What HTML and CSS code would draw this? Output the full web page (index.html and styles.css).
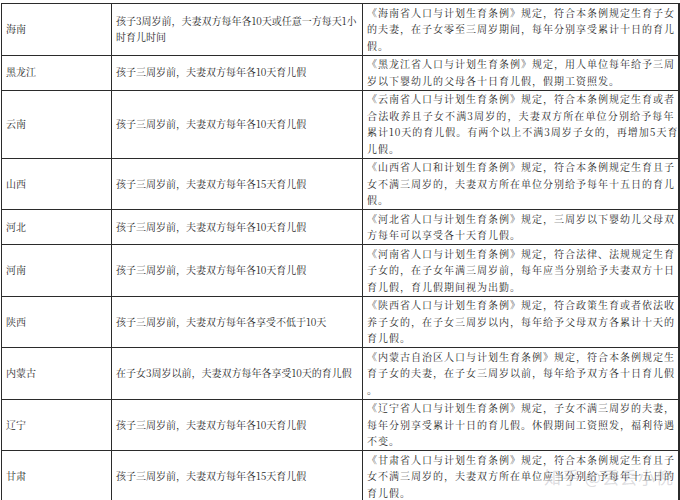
FILE: index.html
```html
<!DOCTYPE html>
<html lang="zh-CN">
<head>
<meta charset="utf-8">
<title>育儿假规定</title>
<link rel="stylesheet" href="styles.css">
</head>
<body>
<div class="page">
<table class="law">
  <colgroup><col class="c1"><col class="c2"><col class="c3"></colgroup>
  <tr>
    <td class="prov">海南</td>
    <td class="rule">孩子3周岁前，夫妻双方每年各10天或任意一方每天1小<br>时育儿时间</td>
    <td class="text"><span class="ln">《海南省人口与计划生育条例》规定，符合本条例规定生育子女</span><span class="ln">的夫妻，在子女零至三周岁期间，每年分别享受累计十日的育儿</span>假。</td>
  </tr>
  <tr>
    <td class="prov">黑龙江</td>
    <td class="rule">孩子三周岁前，夫妻双方每年各10天育儿假</td>
    <td class="text"><span class="ln">《黑龙江省人口与计划生育条例》规定，用人单位每年给予三周</span>岁以下婴幼儿的父母各十日育儿假，假期工资照发。</td>
  </tr>
  <tr>
    <td class="prov">云南</td>
    <td class="rule">孩子三周岁前，夫妻双方每年各10天育儿假</td>
    <td class="text"><span class="ln">《云南省人口与计划生育条例》规定，符合本条例规定生育或者</span><span class="ln">合法收养且子女不满3周岁的，夫妻双方所在单位分别给予每年</span><span class="ln">累计10天的育儿假。有两个以上不满3周岁子女的，再增加5天育</span>儿假。</td>
  </tr>
  <tr>
    <td class="prov">山西</td>
    <td class="rule">孩子三周岁前，夫妻双方每年各15天育儿假</td>
    <td class="text"><span class="ln">《山西省人口和计划生育条例》规定，符合本条例规定生育且子</span><span class="ln">女不满三周岁的，夫妻双方所在单位分别给予每年十五日的育儿</span>假。</td>
  </tr>
  <tr>
    <td class="prov">河北</td>
    <td class="rule">孩子三周岁前，夫妻双方每年各10天育儿假</td>
    <td class="text"><span class="ln">《河北省人口与计划生育条例》规定，三周岁以下婴幼儿父母双</span>方每年可以享受各十天育儿假。</td>
  </tr>
  <tr>
    <td class="prov">河南</td>
    <td class="rule">孩子三周岁前，夫妻双方每年各10天育儿假</td>
    <td class="text"><span class="ln">《河南省人口与计划生育条例》规定，符合法律、法规规定生育</span><span class="ln">子女的，在子女年满三周岁前，每年应当分别给予夫妻双方十日</span>育儿假，育儿假期间视为出勤。</td>
  </tr>
  <tr>
    <td class="prov">陕西</td>
    <td class="rule">孩子三周岁前，夫妻双方每年各享受不低于10天</td>
    <td class="text"><span class="ln">《陕西省人口与计划生育条例》规定，符合政策生育或者依法收</span><span class="ln">养子女的，在子女三周岁以内，每年给予父母双方各累计十天的</span>育儿假。</td>
  </tr>
  <tr>
    <td class="prov">内蒙古</td>
    <td class="rule">在子女3周岁以前，夫妻双方每年各享受10天的育儿假</td>
    <td class="text"><span class="ln">《内蒙古自治区人口与计划生育条例》规定，符合本条例规定生</span><span class="ln">育子女的夫妻，在子女三周岁以前，每年给予双方各十日育儿假</span>。</td>
  </tr>
  <tr>
    <td class="prov">辽宁</td>
    <td class="rule">孩子三周岁前，夫妻双方每年各10天育儿假</td>
    <td class="text"><span class="ln">《辽宁省人口与计划生育条例》规定，子女不满三周岁的夫妻，</span><span class="ln">每年分别享受累计十日的育儿假。休假期间工资照发，福利待遇</span>不变。</td>
  </tr>
  <tr>
    <td class="prov">甘肃</td>
    <td class="rule">孩子三周岁前，夫妻双方每年各15天育儿假</td>
    <td class="text"><span class="ln">《甘肃省人口与计划生育条例》规定，符合本条例规定生育且子</span><span class="ln">女不满三周岁的，夫妻双方所在单位应当分别给予每年十五日的</span>育儿假。</td>
  </tr>
</table>
<div class="mark">知乎 @丢丢小倪</div>
</div>
</body>
</html>
```
FILE: styles.css
```css
html, body {
  margin: 0;
  padding: 0;
  background: #ffffff;
}
body {
  width: 680px;
  height: 500px;
  overflow: hidden;
  font-family: "Noto Serif CJK SC", "Source Han Serif SC", "AR PL UMing CN", "Noto Sans CJK SC", serif;
  color: #2a2a2a;
}
.page {
  position: relative;
  width: 680px;
  height: 500px;
  padding-top: 3px;
  box-sizing: border-box;
}
.law {
  border-collapse: collapse;
  table-layout: fixed;
  width: 677px;
  margin-left: 1px;
}
.c1 { width: 110px; }
.c2 { width: 251px; }
.c3 { width: 316px; }
.law td {
  border: 1px solid #2b2b2b;
  vertical-align: middle;
  font-size: 10px;
  line-height: 16.5px;
  padding: 0.5px 4px;
}
.law td.text {
  border-right-width: 2px;
  padding: 0.5px 3px 0.5px 4px;
  letter-spacing: 1px;
  text-align: justify;
}
.ln {
  display: block;
  text-align: justify;
  text-align-last: justify;
  white-space: nowrap;
}
.mark {
  position: absolute;
  left: 544px;
  top: 464px;
  font-family: "Noto Sans CJK SC", sans-serif;
  font-size: 17px;
  color: rgba(140, 140, 150, 0.3);
  letter-spacing: 1px;
  white-space: nowrap;
}
```
